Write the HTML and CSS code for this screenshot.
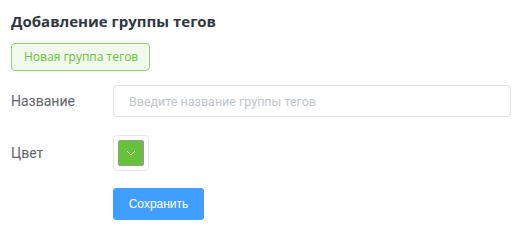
FILE: index.html
```html
<!DOCTYPE html>
<html lang="ru">
<head>
<meta charset="utf-8">
<link rel="stylesheet" href="styles.css">
</head>
<body>
<div class="panel">
  <h3 class="title">Добавление группы тегов</h3>
  <div class="tag-row"><span class="tag">Новая группа тегов</span></div>
  <div class="form">
    <div class="form-item">
      <label class="label">Название</label>
      <div class="control">
        <input class="input" type="text" placeholder="Введите название группы тегов">
      </div>
    </div>
    <div class="form-item">
      <label class="label">Цвет</label>
      <div class="control">
        <div class="picker">
          <div class="swatch">
            <svg class="arrow" viewBox="0 0 10 6" width="10" height="6"><path d="M1 1 L5 5 L9 1" fill="none" stroke="#fff" stroke-width="1"/></svg>
          </div>
        </div>
      </div>
    </div>
    <div class="form-item">
      <span class="label"></span>
      <div class="control">
        <button class="btn" type="button">Сохранить</button>
      </div>
    </div>
  </div>
</div>
</body>
</html>
```

FILE: styles.css
```css
html, body {
  margin: 0;
  padding: 0;
  background: #fff;
  font-family: "Liberation Sans", Arial, sans-serif;
}
.panel {
  padding: 11px 9px 0 11px;
}
.title {
  margin: 0;
  font-family: "Open Sans", "Liberation Sans", sans-serif;
  font-size: 15px;
  line-height: 20px;
  font-weight: bold;
  color: #2f3640;
}
.tag-row {
  margin-top: 12px;
}
.tag {
  display: inline-block;
  box-sizing: border-box;
  height: 28px;
  line-height: 26px;
  padding: 0 11px 0 12px;
  font-family: "Open Sans", "Liberation Sans", sans-serif;
  font-size: 12px;
  color: #67c23a;
  background: #f0f9eb;
  border: 1px solid #8fd36a;
  border-radius: 4px;
}
.form {
  margin-top: 14px;
}
.form-item {
  display: flex;
  align-items: center;
  margin-bottom: 18px;
}
.form-item:nth-child(2) {
  margin-bottom: 17px;
}
.label {
  width: 102px;
  flex: none;
  font-family: Roboto, "Liberation Sans", sans-serif;
  font-size: 14px;
  color: #606266;
}
.control {
  flex: 1;
  display: flex;
}
.input {
  box-sizing: border-box;
  width: 100%;
  height: 32px;
  padding: 0 15px;
  font-family: Roboto, "Liberation Sans", sans-serif;
  font-size: 12.5px;
  color: #606266;
  border: 1px solid #dcdfe6;
  border-radius: 4px;
  outline: none;
}
.input::placeholder {
  color: #c0c4cc;
}
.picker {
  box-sizing: border-box;
  width: 36px;
  height: 36px;
  padding: 4px;
  border: 1px solid #e6e6e6;
  border-radius: 4px;
}
.swatch {
  box-sizing: border-box;
  width: 26px;
  height: 26px;
  background: #67c23a;
  border: 1px solid #999;
  border-radius: 2px;
  display: flex;
  align-items: center;
  justify-content: center;
}
.btn {
  box-sizing: border-box;
  width: 91px;
  height: 32px;
  border: 1px solid #409eff;
  border-radius: 3px;
  background: #409eff;
  color: #fff;
  font-family: inherit;
  font-size: 12px;
  padding: 0;
}
```
